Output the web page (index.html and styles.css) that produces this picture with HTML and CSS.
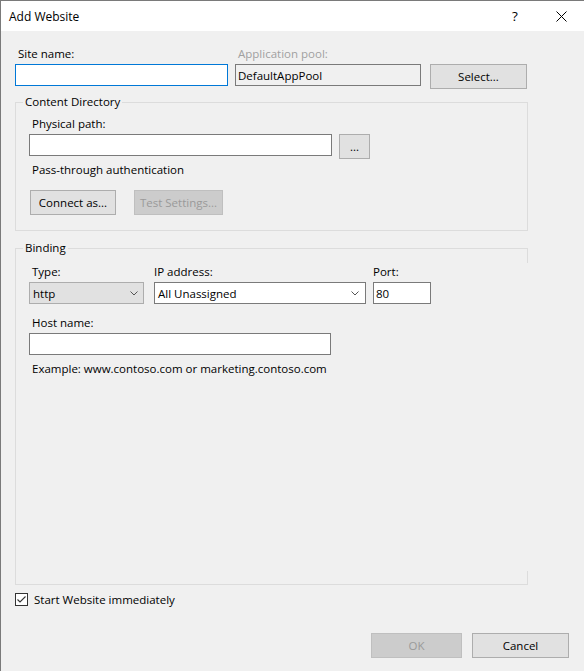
FILE: index.html
```html
<!DOCTYPE html>
<html lang="en">
<head>
<meta charset="utf-8">
<title>Add Website</title>
<link rel="stylesheet" href="styles.css">
</head>
<body>
<div class="window">
  <div class="titlebar">
    <span class="title">Add Website</span>
    <span class="tb-btn help">?</span>
    <span class="tb-btn close">
      <svg width="11" height="11" viewBox="0 0 11 11"><path d="M0.5 0.5 L10.5 10.5 M10.5 0.5 L0.5 10.5" stroke="#000" stroke-width="1" fill="none"/></svg>
    </span>
  </div>
  <div class="content">
    <div class="row1">
      <div class="col col-site">
        <label class="lbl">Site name:</label>
        <input class="input focus" type="text">
      </div>
      <div class="col col-pool">
        <label class="lbl disabled-text">Application pool:</label>
        <input class="input readonly" type="text" value="DefaultAppPool" readonly>
      </div>
      <div class="col col-select">
        <button class="btn">Select...</button>
      </div>
    </div>

    <fieldset class="group content-dir">
      <legend>Content Directory</legend>
      <div class="group-body cd-body">
        <label class="lbl">Physical path:</label>
        <div class="path-row">
          <input class="input path" type="text">
          <button class="btn browse">...</button>
        </div>
        <div class="lbl pass">Pass-through authentication</div>
        <div class="btn-row">
          <button class="btn connect">Connect as...</button>
          <button class="btn disabled test">Test Settings...</button>
        </div>
      </div>
    </fieldset>

    <div class="binding-wrap">
      <fieldset class="group binding">
        <legend>Binding</legend>
        <div class="group-body bind-body">
          <div class="bind-row">
            <div class="col col-type">
              <label class="lbl">Type:</label>
              <div class="select gray"><span>http</span>
                <svg width="8" height="5" viewBox="0 0 8 5"><polyline points="0.5,0.5 4,4 7.5,0.5" stroke="#555" stroke-width="1" fill="none"/></svg>
              </div>
            </div>
            <div class="col col-ip">
              <label class="lbl flush">IP address:</label>
              <div class="select white"><span>All Unassigned</span>
                <svg width="8" height="5" viewBox="0 0 8 5"><polyline points="0.5,0.5 4,4 7.5,0.5" stroke="#555" stroke-width="1" fill="none"/></svg>
              </div>
            </div>
            <div class="col col-port">
              <label class="lbl flush">Port:</label>
              <input class="input" type="text" value="80">
            </div>
          </div>
          <label class="lbl host-lbl">Host name:</label>
          <input class="input host" type="text">
          <div class="lbl example">Example: www.contoso.com or marketing.contoso.com</div>
        </div>
      </fieldset>
    </div>

    <div class="check-row">
      <span class="checkbox">
        <svg width="11" height="11" viewBox="0 0 11 11"><polyline points="1.5,5.5 4,8 9.5,2.5" stroke="#333" stroke-width="1.1" fill="none"/></svg>
      </span>
      <span class="check-label">Start Website immediately</span>
    </div>

    <div class="footer">
      <button class="btn disabled ok">OK</button>
      <button class="btn cancel">Cancel</button>
    </div>
  </div>
</div>
</body>
</html>
```

FILE: styles.css
```css
* { box-sizing: border-box; }

body {
  margin: 0;
  background: #f0f0f0;
  font-family: "Open Sans", "Noto Sans", sans-serif;
  font-size: 11.5px;
  line-height: 15px;
  color: #000;
}

.window {
  width: 584px;
  height: 671px;
  border-top: 1px solid #7a7a7a;
  border-left: 1px solid #7a7a7a;
  background: #f0f0f0;
  overflow: hidden;
}

.titlebar {
  height: 30px;
  background: #fff;
  display: flex;
  align-items: center;
}

.title {
  flex: 1;
  padding-left: 8px;
  font-size: 12px;
}

.tb-btn {
  width: 46px;
  height: 30px;
  display: flex;
  align-items: center;
  justify-content: center;
}

.help { font-size: 13.5px; }

.content {
  padding: 15px 15px 0 14px;
}

.row1 {
  display: flex;
  align-items: flex-start;
}

.col-site { width: 213px; }
.col-pool { width: 186px; margin-left: 7px; }
.col-select { width: 97px; margin-left: 9px; padding-top: 18px; }

.lbl {
  display: block;
  padding-left: 3px;
  margin-bottom: 3px;
  line-height: 15px;
}
.lbl.flush { padding-left: 0; }

.disabled-text { color: #a0a0a0; }

.input {
  display: block;
  width: 100%;
  height: 22px;
  margin: 0;
  padding: 0 2px;
  border: 1px solid #7a7a7a;
  background: #fff;
  font: inherit;
  color: #000;
  outline: none;
}
.input.focus { border-color: #0078d7; }
.input.readonly { background: #f0f0f0; }

.btn {
  display: block;
  height: 25px;
  margin: 0;
  padding: 0;
  border: 1px solid #adadad;
  background: #e1e1e1;
  font: inherit;
  color: #000;
  width: 100%;
}
.btn.disabled {
  background: #cccccc;
  border-color: #bfbfbf;
  color: #9a9a9a;
}

.group {
  width: 513px;
  margin: 0;
  padding: 0;
  min-width: 0;
  border: 1px solid #dcdcdc;
}
.group legend {
  margin-left: 7px;
  padding: 0 2px 2px;
  line-height: 15px;
}

.content-dir { margin-top: 5px; }

.cd-body { padding: 5px 0 15px 13px; }

.path-row {
  display: flex;
  align-items: flex-start;
  gap: 7px;
}
.input.path { width: 303px; }
.btn.browse { width: 31px; }

.lbl.pass { margin-top: 3px; margin-bottom: 0; }

.btn-row {
  display: flex;
  margin-top: 13px;
}
.btn.connect { width: 86px; margin-left: 1px; }
.btn.test { width: 89px; margin-left: 18px; }

.binding-wrap {
  position: relative;
  width: 513px;
  margin-top: 9px;
}
.binding-wrap::before,
.binding-wrap::after {
  content: "";
  position: absolute;
  right: 0;
  width: 1px;
  background: #dcdcdc;
}
.binding-wrap::before { top: 8px; height: 15px; }
.binding-wrap::after { bottom: 0; height: 14px; }

.group.binding {
  width: 512px;
  border-right: none;
}

.bind-body { padding: 7px 0 208px 13px; }

.bind-row { display: flex; }
.col-type { width: 115px; }
.col-ip { width: 212px; margin-left: 10px; }
.col-port { width: 58px; margin-left: 7px; }

.select {
  height: 22px;
  display: flex;
  align-items: center;
  justify-content: space-between;
  padding: 0 5px 0 3px;
  border: 1px solid #7a7a7a;
}
.select.gray {
  background: #e1e1e1;
  border-color: #adadad;
}
.select.white {
  background: #fff;
  padding-right: 6px;
}

.lbl.host-lbl { margin-top: 11px; }
.input.host { width: 302px; }
.lbl.example { margin-top: 6px; margin-bottom: 0; }

.check-row {
  display: flex;
  align-items: center;
  margin-top: 7px;
  height: 15px;
}
.checkbox {
  width: 13px;
  height: 13px;
  border: 1px solid #333;
  background: #fff;
  display: flex;
  align-items: center;
  justify-content: center;
}
.check-label { margin-left: 6px; }

.footer {
  display: flex;
  justify-content: flex-end;
  gap: 10px;
  margin-top: 26px;
}
.btn.ok { width: 91px; }
.btn.cancel { width: 97px; }
```
